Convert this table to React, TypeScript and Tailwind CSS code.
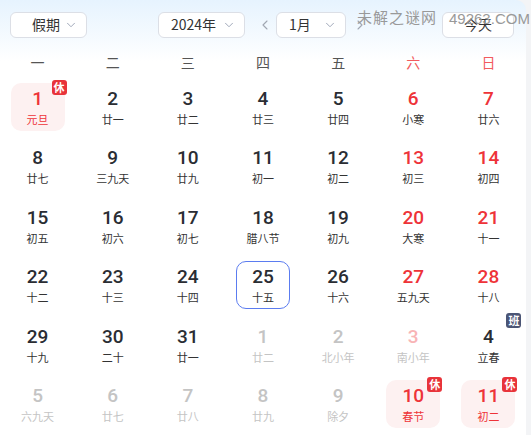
import { ChevronDown, ChevronLeft, ChevronRight } from 'lucide-react';

type Day = {
  d: number;
  lunar: string;
  kind?: 'weekend' | 'other' | 'otherWeekend';
  holiday?: boolean;
  work?: boolean;
  today?: boolean;
};

const weeks: Day[][] = [
  [
    { d: 1, lunar: '元旦', holiday: true },
    { d: 2, lunar: '廿一' },
    { d: 3, lunar: '廿二' },
    { d: 4, lunar: '廿三' },
    { d: 5, lunar: '廿四' },
    { d: 6, lunar: '小寒', kind: 'weekend' },
    { d: 7, lunar: '廿六', kind: 'weekend' },
  ],
  [
    { d: 8, lunar: '廿七' },
    { d: 9, lunar: '三九天' },
    { d: 10, lunar: '廿九' },
    { d: 11, lunar: '初一' },
    { d: 12, lunar: '初二' },
    { d: 13, lunar: '初三', kind: 'weekend' },
    { d: 14, lunar: '初四', kind: 'weekend' },
  ],
  [
    { d: 15, lunar: '初五' },
    { d: 16, lunar: '初六' },
    { d: 17, lunar: '初七' },
    { d: 18, lunar: '腊八节' },
    { d: 19, lunar: '初九' },
    { d: 20, lunar: '大寒', kind: 'weekend' },
    { d: 21, lunar: '十一', kind: 'weekend' },
  ],
  [
    { d: 22, lunar: '十二' },
    { d: 23, lunar: '十三' },
    { d: 24, lunar: '十四' },
    { d: 25, lunar: '十五', today: true },
    { d: 26, lunar: '十六' },
    { d: 27, lunar: '五九天', kind: 'weekend' },
    { d: 28, lunar: '十八', kind: 'weekend' },
  ],
  [
    { d: 29, lunar: '十九' },
    { d: 30, lunar: '二十' },
    { d: 31, lunar: '廿一' },
    { d: 1, lunar: '廿二', kind: 'other' },
    { d: 2, lunar: '北小年', kind: 'other' },
    { d: 3, lunar: '南小年', kind: 'otherWeekend' },
    { d: 4, lunar: '立春', work: true },
  ],
  [
    { d: 5, lunar: '六九天', kind: 'other' },
    { d: 6, lunar: '廿七', kind: 'other' },
    { d: 7, lunar: '廿八', kind: 'other' },
    { d: 8, lunar: '廿九', kind: 'other' },
    { d: 9, lunar: '除夕', kind: 'other' },
    { d: 10, lunar: '春节', holiday: true },
    { d: 11, lunar: '初二', holiday: true },
  ],
];

const weekdays = ['一', '二', '三', '四', '五', '六', '日'];

function Select({ label, width, pad }: { label: string; width: string; pad: string }) {
  return (
    <div
      className={`${width} ${pad} h-[26px] flex items-center justify-between rounded-[6px] border border-[#dcdfe6] bg-white pr-[8px] text-[14px] text-[#333] whitespace-nowrap`}
    >
      <span>{label}</span>
      <ChevronDown className="w-[14px] h-[14px] text-[#9aa3b5]" strokeWidth={1.6} />
    </div>
  );
}

function DayCell({ day }: { day: Day }) {
  let numColor = 'text-[#2a2d33]';
  let lunarColor = 'text-[#333]';
  if (day.kind === 'weekend') numColor = 'text-[#ee3338]';
  if (day.kind === 'other') {
    numColor = 'text-[#c4c4c4]';
    lunarColor = 'text-[#c4c4c4]';
  }
  if (day.kind === 'otherWeekend') {
    numColor = 'text-[#f8b4b6]';
    lunarColor = 'text-[#c4c4c4]';
  }
  if (day.holiday) {
    numColor = 'text-[#ee3338]';
    lunarColor = 'text-[#ee3338]';
  }

  let box = 'border border-transparent';
  if (day.holiday) box = 'bg-[#fdf1f1] border border-transparent';
  if (day.today) box = 'border border-[#5b7cf0]';

  return (
    <div className="h-[59.5px] flex items-center justify-center">
      <div
        className={`relative w-[54px] h-[48px] rounded-[10px] flex flex-col items-center justify-center ${box}`}
      >
        <span
          className={`text-[19px] leading-[22px] font-medium ${numColor}`}
          style={{ fontFamily: 'Roboto, "Noto Sans", sans-serif' }}
        >
          {day.d}
        </span>
        <span className={`text-[11px] leading-[14px] mt-[2px] ${lunarColor}`}>{day.lunar}</span>
        {day.holiday && (
          <span className="absolute -top-[4px] -right-[3px] w-[15px] h-[15px] rounded-[3px] bg-[#e8333a] text-white text-[11px] leading-[15px] text-center font-bold">
            休
          </span>
        )}
        {day.work && (
          <span className="absolute -top-[9px] right-[-7px] w-[15px] h-[15px] rounded-[3px] bg-[#4b5575] text-white text-[11px] leading-[15px] text-center font-bold">
            班
          </span>
        )}
      </div>
    </div>
  );
}

export default function App() {
  return (
    <div
      className="w-[531px] h-[435px] overflow-hidden bg-[#f3f4f6] flex"
      style={{ fontFamily: '"Noto Sans CJK SC", "Noto Sans", sans-serif' }}
    >
      <div className="relative w-[526px] h-full bg-white rounded-tr-[10px] bg-gradient-to-b from-[#e6f3fe] to-white to-[14%]">
        {/* Header */}
        <div className="h-[48px] flex items-center px-[10px] pt-[1px]">
          <Select label="假期" width="w-[77px]" pad="pl-[21px]" />
          <div className="ml-[71px]">
            <Select label="2024年" width="w-[87px]" pad="pl-[12px]" />
          </div>
          <ChevronLeft className="ml-[12px] w-[16px] h-[16px] text-[#a0a6b2]" strokeWidth={1.6} />
          <div className="ml-[3px]">
            <Select label="1月" width="w-[70px]" pad="pl-[12px]" />
          </div>
          <ChevronRight className="ml-[6px] w-[16px] h-[16px] text-[#a0a6b2]" strokeWidth={1.6} />
          <div className="ml-auto mr-[2px] w-[72px] h-[26px] rounded-[6px] border border-[#dcdfe6] bg-white flex items-center justify-center text-[14px] text-[#333]">
            今天
          </div>
        </div>

        {/* Watermark */}
        <div className="absolute top-[6px] left-[357px] text-[15px] text-[#999] tracking-[1px]">未解之谜网</div>
        <div
          className="absolute top-[8px] left-[449px] text-[15px] text-[#999]"
          style={{ fontFamily: '"Liberation Sans", Arial, sans-serif' }}
        >
          49263.COM
        </div>

        {/* Weekdays */}
        <div className="grid grid-cols-7 h-[29px] items-center text-[14px]">
          {weekdays.map((w, i) => (
            <div key={w} className={`text-center ${i >= 5 ? 'text-[#f25b5e]' : 'text-[#555]'}`}>
              {w}
            </div>
          ))}
        </div>

        {/* Days */}
        <div className="grid grid-cols-7">
          {weeks.flat().map((day, i) => (
            <DayCell key={i} day={day} />
          ))}
        </div>
      </div>
    </div>
  );
}
